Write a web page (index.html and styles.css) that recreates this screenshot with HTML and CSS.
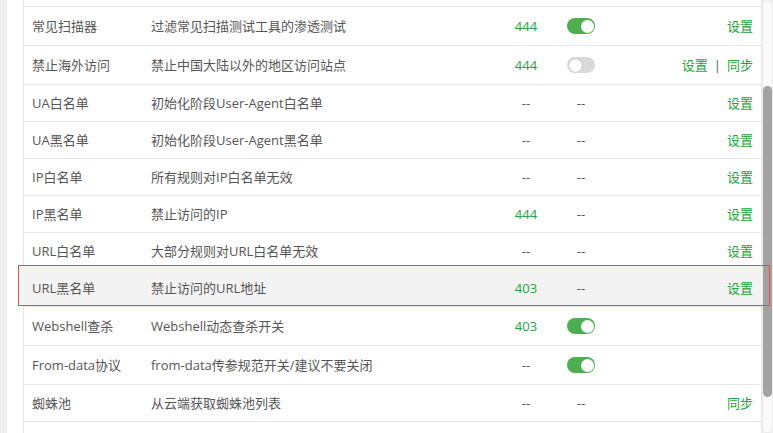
FILE: index.html
```html
<!DOCTYPE html>
<html lang="zh-CN">
<head>
<meta charset="utf-8">
<title>规则列表</title>
<link rel="stylesheet" href="styles.css">
</head>
<body>
<div class="page">
  <div class="panel">
    <div class="list">
      <div class="row stub"></div>
      <div class="row tall">
        <div class="c name">常见扫描器</div>
        <div class="c desc">过滤常见扫描测试工具的渗透测试</div>
        <div class="c num green">444</div>
        <div class="c sw"><span class="switch on"></span></div>
        <div class="c act"><a class="link">设置</a></div>
      </div>
      <div class="row tall">
        <div class="c name">禁止海外访问</div>
        <div class="c desc">禁止中国大陆以外的地区访问站点</div>
        <div class="c num green">444</div>
        <div class="c sw"><span class="switch"></span></div>
        <div class="c act"><a class="link">设置</a><span class="sep">|</span><a class="link">同步</a></div>
      </div>
      <div class="row">
        <div class="c name">UA白名单</div>
        <div class="c desc">初始化阶段User-Agent白名单</div>
        <div class="c num">--</div>
        <div class="c sw">--</div>
        <div class="c act"><a class="link">设置</a></div>
      </div>
      <div class="row">
        <div class="c name">UA黑名单</div>
        <div class="c desc">初始化阶段User-Agent黑名单</div>
        <div class="c num">--</div>
        <div class="c sw">--</div>
        <div class="c act"><a class="link">设置</a></div>
      </div>
      <div class="row">
        <div class="c name">IP白名单</div>
        <div class="c desc">所有规则对IP白名单无效</div>
        <div class="c num">--</div>
        <div class="c sw">--</div>
        <div class="c act"><a class="link">设置</a></div>
      </div>
      <div class="row">
        <div class="c name">IP黑名单</div>
        <div class="c desc">禁止访问的IP</div>
        <div class="c num green">444</div>
        <div class="c sw">--</div>
        <div class="c act"><a class="link">设置</a></div>
      </div>
      <div class="row">
        <div class="c name">URL白名单</div>
        <div class="c desc">大部分规则对URL白名单无效</div>
        <div class="c num">--</div>
        <div class="c sw">--</div>
        <div class="c act"><a class="link">设置</a></div>
      </div>
      <div class="row hl">
        <div class="c name">URL黑名单</div>
        <div class="c desc">禁止访问的URL地址</div>
        <div class="c num green">403</div>
        <div class="c sw">--</div>
        <div class="c act"><a class="link">设置</a></div>
      </div>
      <div class="row tall">
        <div class="c name">Webshell查杀</div>
        <div class="c desc">Webshell动态查杀开关</div>
        <div class="c num green">403</div>
        <div class="c sw"><span class="switch on"></span></div>
        <div class="c act"></div>
      </div>
      <div class="row tall">
        <div class="c name">From-data协议</div>
        <div class="c desc">from-data传参规范开关/建议不要关闭</div>
        <div class="c num">--</div>
        <div class="c sw"><span class="switch on"></span></div>
        <div class="c act"></div>
      </div>
      <div class="row">
        <div class="c name">蜘蛛池</div>
        <div class="c desc">从云端获取蜘蛛池列表</div>
        <div class="c num">--</div>
        <div class="c sw">--</div>
        <div class="c act"><a class="link">同步</a></div>
      </div>
      <div class="row rest"></div>
    </div>
  </div>
  <div class="scrollbar"><div class="thumb"></div></div>
</div>
</body>
</html>
```
FILE: styles.css
```css
html, body {
  margin: 0;
  padding: 0;
}
body {
  background: #efefef;
  font-family: "Open Sans", "Noto Sans CJK SC", sans-serif;
  font-size: 13px;
  color: #555;
}
.page {
  display: flex;
  width: 773px;
  height: 433px;
  overflow: hidden;
}
.panel {
  margin-left: 7px;
  flex: 1;
  background: #fff;
  padding-left: 16px;
  display: flex;
}
.list {
  flex: 1;
  border-left: 1px solid #e6e6e6;
  border-right: 1px solid #e6e6e6;
  display: flex;
  flex-direction: column;
}
.row {
  position: relative;
  display: grid;
  grid-template-columns: 119px 1fr 60px 50px 155px;
  align-items: center;
  box-sizing: border-box;
  height: 37px;
  border-bottom: 1px solid #e6e6e6;
}
.row.tall {
  height: 39px;
}
.row.stub {
  height: 7px;
}
.row.rest {
  flex: 1;
  border-bottom: none;
}
.c {
  position: relative;
  z-index: 2;
  line-height: 18px;
  white-space: nowrap;
}
.name, .desc {
  padding-left: 8px;
}
.num, .sw {
  text-align: center;
}
.sw {
  display: flex;
  justify-content: center;
  align-items: center;
}
.act {
  text-align: right;
  padding-right: 8px;
}
.green, .link {
  color: #20a53a;
}
.link {
  text-decoration: none;
}
.sep {
  color: #555;
  margin: 0 6px;
}
.switch {
  display: block;
  position: relative;
  width: 28px;
  height: 16px;
  border-radius: 8px;
  background: #d9d9d9;
  box-sizing: border-box;
}
.switch::after {
  content: "";
  position: absolute;
  top: 1.5px;
  left: 1.5px;
  width: 13px;
  height: 13px;
  border-radius: 50%;
  background: #fff;
  box-shadow: 0 0 1px rgba(0, 0, 0, 0.35);
}
.switch.on {
  background: #4caf50;
}
.switch.on::after {
  left: auto;
  right: 1.5px;
  box-shadow: none;
}
.row.hl::before {
  content: "";
  position: absolute;
  z-index: 1;
  top: -5px;
  left: -6px;
  right: -9px;
  bottom: 0;
  border: 1px solid #d9534f;
  background: linear-gradient(to right, #f3f3f3 0, #f3f3f3 743px, transparent 743px);
}
.scrollbar {
  width: 11px;
  box-sizing: border-box;
  background: #fafafa;
  border: 1px solid #ececec;
  border-radius: 5px;
  padding-top: 85px;
}
.thumb {
  height: 311px;
  margin-left: 0;
  background: #a2a2a2;
  border-radius: 5px;
}
```
